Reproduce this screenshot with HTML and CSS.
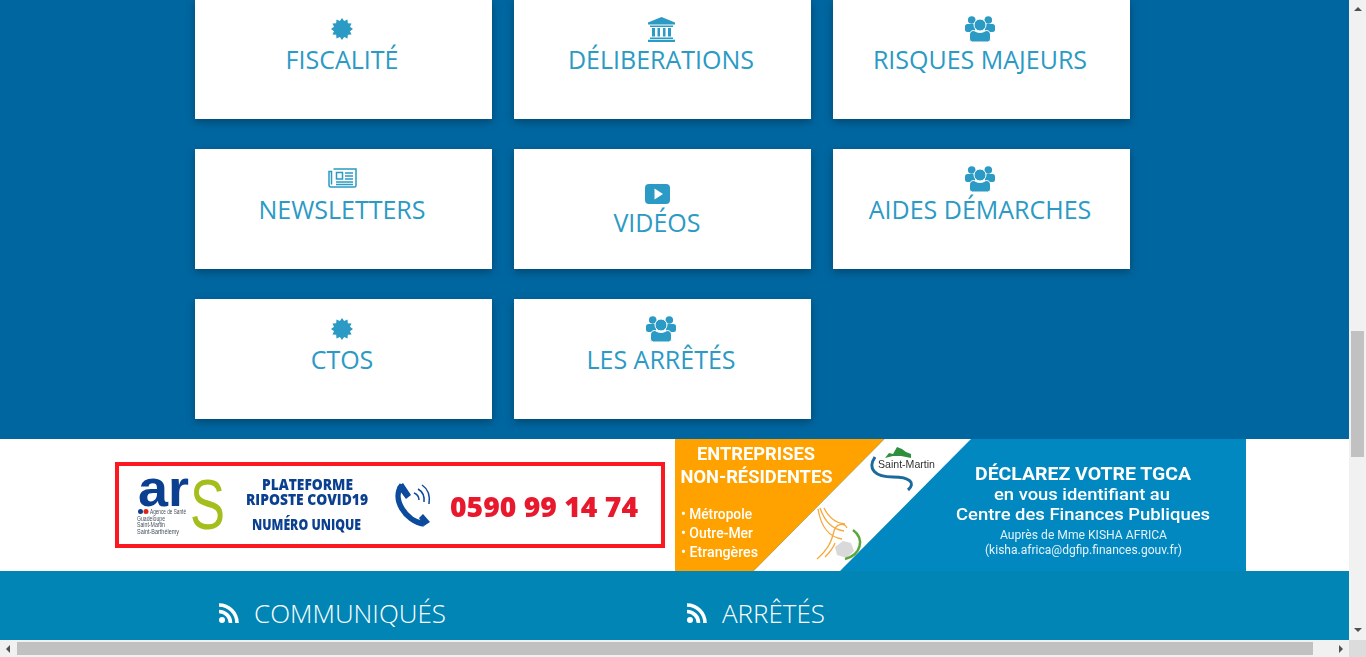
FILE: index.html
```html
<!DOCTYPE html>
<html lang="fr">
<head>
    <meta charset="UTF-8">
    <meta name="viewport" content="width=device-width, initial-scale=1.0">
    <title>Saint-Martin - Services</title>
    <link rel="stylesheet" href="styles.css">
</head>
<body>
    <svg class="defs" width="0" height="0" aria-hidden="true">
        <symbol id="i-badge" viewBox="0 0 24 24">
            <polygon points="24,12 20.69,14.33 22.39,18 18.36,18.36 18,22.39 14.33,20.69 12,24 9.67,20.69 6,22.39 5.64,18.36 1.61,18 3.31,14.33 0,12 3.31,9.67 1.61,6 5.64,5.64 6,1.61 9.67,3.31 12,0 14.33,3.31 18,1.61 18.36,5.64 22.39,6 20.69,9.67"/>
        </symbol>
        <symbol id="i-bank" viewBox="0 0 27 25">
            <path d="M13.5 0 27 5.5V7.5H0V5.5Z"/>
            <path d="M2 8.5H25V10H2ZM4 11H7V19.5H4ZM9.5 11H12V19.5H9.5ZM15 11H17.5V19.5H15ZM20 11H23V19.5H20ZM2 20.5H25V22H2ZM0 22.8H27V25H0Z"/>
        </symbol>
        <symbol id="i-users" viewBox="0 0 30 26">
            <circle cx="6.7" cy="4" r="3.8"/>
            <circle cx="23.3" cy="4" r="3.8"/>
            <path d="M0 10.5Q0 8 2.5 8H8Q10 8 10 11V16H2.5Q0 16 0 13.5Z"/>
            <path d="M30 10.5Q30 8 27.5 8H22Q20 8 20 11V16H27.5Q30 16 30 13.5Z"/>
            <circle cx="15" cy="9" r="6" class="ring"/>
            <path class="ring" d="M4.5 19Q4.5 14.5 9 14.5Q12 16.5 15 16.5T21 14.5Q25.500 14.500 25.500 19V23Q25.500 26 22.500 26H7.500Q4.500 26 4.500 23Z"/>
        </symbol>
        <symbol id="i-news" viewBox="0 0 29 20">
            <path class="line" d="M5.500 1H28V17.500Q28 19 26.500 19H3Q1 19 1 17V3.500H3.500V16.500"/>
            <path class="line" d="M8.500 4.500H14.500V11H8.500Z"/>
            <path class="line" d="M17 5H25M17 8H25M17 11H25M8 14H25M8 16.500H25"/>
        </symbol>
        <symbol id="i-play" viewBox="0 0 25 20">
            <path fill-rule="evenodd" d="M4 0H21Q25 0 25 4V16Q25 20 21 20H4Q0 20 0 16V4Q0 0 4 0ZM9.500 4.500V15.500L18 10Z"/>
        </symbol>
    </svg>

    <div class="window">
        <div class="viewport">
            <div class="page">
                <section class="services">
                    <div class="service-grid">
                        <a class="card">
                            <span class="card-icon"><svg class="icon-badge"><use href="#i-badge"/></svg></span>
                            <span class="card-label">FISCALITÉ</span>
                        </a>
                        <a class="card">
                            <span class="card-icon"><svg class="icon-bank"><use href="#i-bank"/></svg></span>
                            <span class="card-label">DÉLIBERATIONS</span>
                        </a>
                        <a class="card">
                            <span class="card-icon"><svg class="icon-users"><use href="#i-users"/></svg></span>
                            <span class="card-label">RISQUES MAJEURS</span>
                        </a>
                        <a class="card">
                            <span class="card-icon"><svg class="icon-news"><use href="#i-news"/></svg></span>
                            <span class="card-label">NEWSLETTERS</span>
                        </a>
                        <a class="card card-video">
                            <span class="card-icon"><svg class="icon-play"><use href="#i-play"/></svg></span>
                            <span class="card-label">VIDÉOS</span>
                        </a>
                        <a class="card">
                            <span class="card-icon"><svg class="icon-users"><use href="#i-users"/></svg></span>
                            <span class="card-label">AIDES DÉMARCHES</span>
                        </a>
                        <a class="card">
                            <span class="card-icon"><svg class="icon-badge"><use href="#i-badge"/></svg></span>
                            <span class="card-label">CTOS</span>
                        </a>
                        <a class="card">
                            <span class="card-icon"><svg class="icon-users"><use href="#i-users"/></svg></span>
                            <span class="card-label">LES ARRÊTÉS</span>
                        </a>
                    </div>
                </section>

                <section class="banners">
                    <svg class="banner-ars" viewBox="0 0 550 86">
                        <rect x="2" y="2" width="546" height="82" fill="#fff" stroke="#fb1820" stroke-width="4"/>
                        <text class="ars-ar" x="23" y="44" textLength="51" lengthAdjust="spacingAndGlyphs">ar</text>
                        <text class="ars-s" x="75" y="67" textLength="35" lengthAdjust="spacingAndGlyphs">S</text>
                        <circle cx="25.500" cy="49.500" r="2.500" fill="#0b3f8f"/>
                        <circle cx="31" cy="49.500" r="2.500" fill="#e2231a"/>
                        <text class="ars-small" x="35" y="52" textLength="36" lengthAdjust="spacingAndGlyphs">Agence de Santé</text>
                        <text class="ars-small" x="22" y="59" textLength="28" lengthAdjust="spacingAndGlyphs">Guadeloupe</text>
                        <text class="ars-small" x="22" y="65" textLength="28" lengthAdjust="spacingAndGlyphs">Saint-Martin</text>
                        <text class="ars-small" x="22" y="72" textLength="42" lengthAdjust="spacingAndGlyphs">Saint-Barthélemy</text>
                        <text class="ars-title" x="147" y="28" textLength="91" lengthAdjust="spacingAndGlyphs">PLATEFORME</text>
                        <text class="ars-title" x="131" y="43" textLength="122" lengthAdjust="spacingAndGlyphs">RIPOSTE COVID19</text>
                        <text class="ars-title" x="137" y="68" textLength="109" lengthAdjust="spacingAndGlyphs">NUMÉRO UNIQUE</text>
                        <path d="M287 23C276 36 290 59 309 62" fill="none" stroke="#0b4a9c" stroke-width="5.500"/>
                        <path d="M282 25 288 21 296 33 291 37ZM304 56 308 52 315 60 309 64Z" fill="#0b4a9c"/>
                        <path d="M299 31Q304 33 304 38M303 27Q310 31 309 40M307 23Q316 29 314 42" fill="none" stroke="#0b4a9c" stroke-width="1.500"/>
                        <text class="ars-phone" x="335" y="55" textLength="188" lengthAdjust="spacingAndGlyphs">0590 99 14 74</text>
                    </svg>

                    <svg class="banner-tgca" viewBox="0 0 571 132">
                        <rect width="571" height="132" fill="#0288c1"/>
                        <polygon points="209.500,0 296,0 165,132 78.500,132" fill="#fff"/>
                        <polygon points="0,0 209.500,0 78.500,132 0,132" fill="#ffa200"/>
                        <text class="tgca-head" x="22" y="21" textLength="118" lengthAdjust="spacingAndGlyphs">ENTREPRISES</text>
                        <text class="tgca-head" x="5.500" y="44" textLength="152" lengthAdjust="spacingAndGlyphs">NON-RÉSIDENTES</text>
                        <text class="tgca-item" x="6" y="80" textLength="71" lengthAdjust="spacingAndGlyphs">• Métropole</text>
                        <text class="tgca-item" x="6" y="99" textLength="72" lengthAdjust="spacingAndGlyphs">• Outre-Mer</text>
                        <text class="tgca-item" x="6" y="118" textLength="77" lengthAdjust="spacingAndGlyphs">• Etrangères</text>
                        <polygon points="210,19 214,14 218,15 222,8 227,10 231,13 236,15 236,19 226,17 218,17" fill="#2f8f3c"/>
                        <path d="M200 18C192 30 200 38 218 38C235 38 241 44 233 51" fill="none" stroke="#1a6b9c" stroke-width="3"/>
                        <text class="tgca-logo" x="203" y="29" textLength="57" lengthAdjust="spacingAndGlyphs">Saint-Martin</text>
                        <path d="M160 108 168 102 176 104 179 112 172 119 162 116Z" fill="#d9d9d9"/>
                        <path d="M143 70C146 88 154 98 167 100M145 69C150 83 157 90 169 92M149 69C154 79 160 84 170 85M142 120C150 113 156 106 159 92C161 85 169 83 172 89M150 118C154 114 158 110 160 104" fill="none" stroke="#f7a83c" stroke-width="1.300"/>
                        <path d="M178 91C190 100 186 116 170 120" fill="none" stroke="#5aa83c" stroke-width="2.500"/>
                        <text class="tgca-title" x="300" y="41" textLength="216" lengthAdjust="spacingAndGlyphs">DÉCLAREZ VOTRE TGCA</text>
                        <text class="tgca-sub" x="319" y="61" textLength="176" lengthAdjust="spacingAndGlyphs">en vous identifiant au</text>
                        <text class="tgca-sub" x="281" y="81" textLength="254" lengthAdjust="spacingAndGlyphs">Centre des Finances Publiques</text>
                        <text class="tgca-note" x="325" y="100" textLength="167" lengthAdjust="spacingAndGlyphs">Auprès de Mme KISHA AFRICA</text>
                        <text class="tgca-note" x="310" y="115" textLength="197" lengthAdjust="spacingAndGlyphs">(kisha.africa@dgfip.finances.gouv.fr)</text>
                    </svg>
                </section>

                <section class="feeds">
                    <h2 class="feed-title">
                        <svg class="icon-rss" viewBox="0 0 21 20"><circle cx="3" cy="17" r="3"/><path d="M0 8.500A11.500 11.500 0 0 1 11.500 20M0 2A18 18 0 0 1 18 20"/></svg>
                        COMMUNIQUÉS
                    </h2>
                    <h2 class="feed-title">
                        <svg class="icon-rss" viewBox="0 0 21 20"><circle cx="3" cy="17" r="3"/><path d="M0 8.500A11.500 11.500 0 0 1 11.500 20M0 2A18 18 0 0 1 18 20"/></svg>
                        ARRÊTÉS
                    </h2>
                </section>
            </div>
        </div>

        <div class="vscroll">
            <span class="arrow arrow-up"></span>
            <span class="vthumb"></span>
            <span class="arrow arrow-down"></span>
        </div>
        <div class="hscroll">
            <span class="arrow arrow-left"></span>
            <span class="hthumb"></span>
            <span class="arrow arrow-right"></span>
        </div>
        <div class="corner"></div>
    </div>
</body>
</html>
```

FILE: styles.css
```css
:root {
    --section-blue: #0066a0;
    --feed-blue: #0085b5;
    --card-text: #2b9ac4;
    --bar-track: #f1f1f1;
    --bar-thumb: #c1c1c1;
    --bar-arrow: #505050;
}

* {
    box-sizing: border-box;
    margin: 0;
    padding: 0;
}

html, body {
    height: 100%;
    overflow: hidden;
}

body {
    font-family: "Open Sans", "Noto Sans", sans-serif;
    background: #fff;
}

.defs {
    display: block;
    height: 0;
}

.window {
    display: grid;
    grid-template-columns: 1fr 17px;
    grid-template-rows: 1fr 17px;
    height: 657px;
}

.viewport {
    overflow: hidden;
}

/* page is scrolled, first row of cards sits just above the top edge */
.page {
    margin-top: -31px;
}

.services {
    background: var(--section-blue);
    padding: 30px 0 20px 195px;
}

.service-grid {
    display: grid;
    grid-template-columns: repeat(3, 297px);
    grid-auto-rows: 120px;
    gap: 30px 22px;
}

.card {
    display: flex;
    flex-direction: column;
    align-items: center;
    padding: 17px 3px 0 0;
    background: #fff;
    color: var(--card-text);
    box-shadow: 0 3px 8px rgba(0, 0, 0, 0.3);
}

.card-video {
    padding: 32px 11px 0 0;
}

.card-video .card-label {
    margin-top: 0;
}

.card-icon {
    display: flex;
    align-items: center;
    justify-content: center;
    height: 26px;
    fill: var(--card-text);
}

.card-label {
    margin-top: 2px;
    font-size: 25px;
    font-weight: 400;
    line-height: 30px;
    white-space: nowrap;
}

.icon-badge { width: 22px; height: 22px; }
.icon-bank { width: 27px; height: 25px; }
.icon-users { width: 30px; height: 26px; }
.icon-news { width: 29px; height: 20px; margin-top: -2px; }
.icon-play { width: 25px; height: 20px; }

.ring {
    stroke: #fff;
    stroke-width: 1;
}

.line {
    fill: none;
    stroke: var(--card-text);
    stroke-width: 1.5;
}

.banners {
    display: flex;
    align-items: center;
    gap: 10px;
    height: 132px;
    padding-left: 115px;
    background: #fff;
}

.banner-ars {
    width: 550px;
    height: 86px;
    flex: none;
    filter: blur(0.4px);
}

.banner-tgca {
    width: 571px;
    height: 132px;
    flex: none;
    filter: blur(0.4px);
}

.ars-ar { font: 700 52px "Liberation Sans", sans-serif; fill: #0b3f8f; }
.ars-s { font: 400 70px "Liberation Sans", sans-serif; fill: #a2bf1c; }
.ars-small { font: 400 7px "Liberation Sans", sans-serif; fill: #44505e; }
.ars-title { font: 800 15px "Open Sans", sans-serif; fill: #0b3f8f; }
.ars-phone { font: 800 29px "Open Sans", sans-serif; fill: #e8192c; }

.tgca-head { font: 700 19px Roboto, sans-serif; fill: #fff; }
.tgca-item { font: 500 14px Roboto, sans-serif; fill: #fff; }
.tgca-logo { font: 400 11px "Liberation Sans", sans-serif; fill: #333; }
.tgca-title { font: 700 19px Roboto, sans-serif; fill: #fff; }
.tgca-sub { font: 500 17px Roboto, sans-serif; fill: #fff; }
.tgca-note { font: 400 12px Roboto, sans-serif; fill: #e4f2f9; }

.feeds {
    display: grid;
    grid-template-columns: 468px 1fr;
    height: 90px;
    padding: 25px 0 0 219px;
    background: var(--feed-blue);
}

.feed-title {
    display: flex;
    align-items: center;
    gap: 14px;
    height: 34px;
    color: #fff;
    font-size: 26px;
    font-weight: 300;
    white-space: nowrap;
}

.icon-rss {
    width: 21px;
    height: 20px;
    fill: #fff;
}

.icon-rss path {
    fill: none;
    stroke: #fff;
    stroke-width: 3.6;
}

/* scrollbars */
.vscroll {
    display: flex;
    flex-direction: column;
    align-items: center;
    background: var(--bar-track);
}

.vthumb {
    width: 13px;
    height: 126px;
    margin-top: 320px;
    background: var(--bar-thumb);
}

.hscroll {
    display: flex;
    align-items: center;
    background: var(--bar-track);
}

.hthumb {
    width: 1296px;
    height: 13px;
    margin-left: 7px;
    background: var(--bar-thumb);
}

.corner {
    background: #dcdcdc;
}

.arrow {
    width: 0;
    height: 0;
    flex: none;
    border: 4px solid transparent;
}

.arrow-up {
    margin-top: 3px;
    border-bottom-color: var(--bar-arrow);
}

.arrow-down {
    margin-top: 171px;
    border-top-color: var(--bar-arrow);
}

.arrow-left {
    margin-left: 2px;
    border-right-color: var(--bar-arrow);
}

.arrow-right {
    margin-left: 26px;
    border-left-color: var(--bar-arrow);
}
```
